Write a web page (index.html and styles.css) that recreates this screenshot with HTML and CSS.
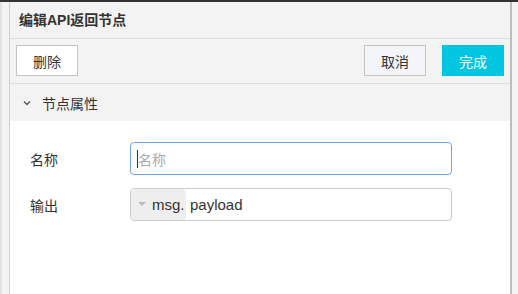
FILE: index.html
```html
<!DOCTYPE html>
<html>
<head>
	<title>编辑API返回节点</title>
	<meta name="viewport" content="width=device-width, initial-scale=1" />
	<link rel="stylesheet" href="styles.css">
</head>
<body>
	<div class="topbar"></div>
	<div class="workspace">
		<div class="gutter"></div>
		<div class="tray">
			<div class="tray-header">编辑API返回节点</div>
			<div class="tray-toolbar">
				<button class="button btn-delete">删除</button>
				<div class="spacer"></div>
				<button class="button btn-cancel">取消</button>
				<button class="button btn-done">完成</button>
			</div>
			<div class="section-header">
				<svg class="chevron" width="8" height="6" viewBox="0 0 8 6"><path d="M1 1.5 L4 4.5 L7 1.5" fill="none" stroke="#555" stroke-width="1.3"/></svg>
				<span>节点属性</span>
			</div>
			<div class="section-body">
				<div class="form-row">
					<label>名称</label>
					<div class="field field-focus">
						<span class="caret"></span><span class="placeholder">名称</span>
					</div>
				</div>
				<div class="form-row">
					<label>输出</label>
					<div class="field field-typed">
						<div class="type-select">
							<svg width="8" height="5" viewBox="0 0 8 5"><path d="M0 0 L8 0 L4 4 Z" fill="#bbb"/></svg>
							<span>msg.</span>
						</div>
						<span class="value">payload</span>
					</div>
				</div>
			</div>
		</div>
		<div class="side"></div>
	</div>
</body>
</html>
```

FILE: styles.css
```css
html, body {
	margin: 0;
	height: 100%;
}

body {
	background-color: #f3f3f3;
	font-family: "Liberation Sans", "Noto Sans CJK SC", sans-serif;
	font-size: 14px;
	color: #333;
	overflow: hidden;
}

.topbar {
	height: 2px;
	background-color: #333333;
}

.workspace {
	display: flex;
	height: 292px;
}

.gutter {
	width: 7px;
	border-left: 2px solid #e2e2e2;
	background-color: #f3f3f3;
}

.tray {
	width: 500px;
	border-left: 1px solid #cfcfcf;
	border-right: 2px solid #bdbdbd;
	background-color: #ffffff;
	display: flex;
	flex-direction: column;
}

.side {
	flex: 1;
}

.tray-header {
	height: 36px;
	line-height: 36px;
	padding-left: 9px;
	font-weight: bold;
	background-color: #f3f3f3;
	border-bottom: 1px solid #dddddd;
}

.tray-toolbar {
	display: flex;
	align-items: flex-start;
	gap: 16px;
	height: 38px;
	padding: 6px 6px 0 6px;
	background-color: #f3f3f3;
	border-bottom: 1px solid #dddddd;
}

.spacer {
	flex: 1;
}

.button {
	width: 62px;
	height: 31px;
	font-family: inherit;
	font-size: 14px;
	color: #333;
	border: 1px solid #c4c4c4;
	background-color: #ffffff;
	padding: 0;
	cursor: pointer;
}

.btn-cancel {
	background-color: #f4f5f9;
}

.btn-done {
	background-color: #00c6e1;
	border-color: #00c6e1;
	color: #ffffff;
}

.section-header {
	display: flex;
	align-items: center;
	height: 37px;
	padding-left: 13px;
	background-color: #f3f3f3;
}

.chevron {
	margin-right: 11px;
}

.section-body {
	padding: 21px 0 0 20px;
}

.form-row {
	display: flex;
	align-items: center;
	margin-bottom: 13px;
}

.form-row label {
	width: 100px;
}

.field {
	box-sizing: border-box;
	width: 322px;
	height: 33px;
	border: 1px solid #cccccc;
	border-radius: 4px;
	display: flex;
	align-items: center;
	overflow: hidden;
}

.field-focus {
	border-color: #6fa6ea;
	padding-left: 6px;
}

.caret {
	width: 1px;
	height: 18px;
	background-color: #333;
}

.placeholder {
	color: #aaaaaa;
}

.type-select {
	box-sizing: border-box;
	display: flex;
	align-items: center;
	height: 100%;
	width: 55px;
	padding-left: 7px;
	background-color: #eeeeee;
	border-radius: 3px 4px 4px 3px;
	gap: 6px;
	font-size: 15px;
}

.value {
	padding-left: 4px;
	font-size: 15px;
}
```
